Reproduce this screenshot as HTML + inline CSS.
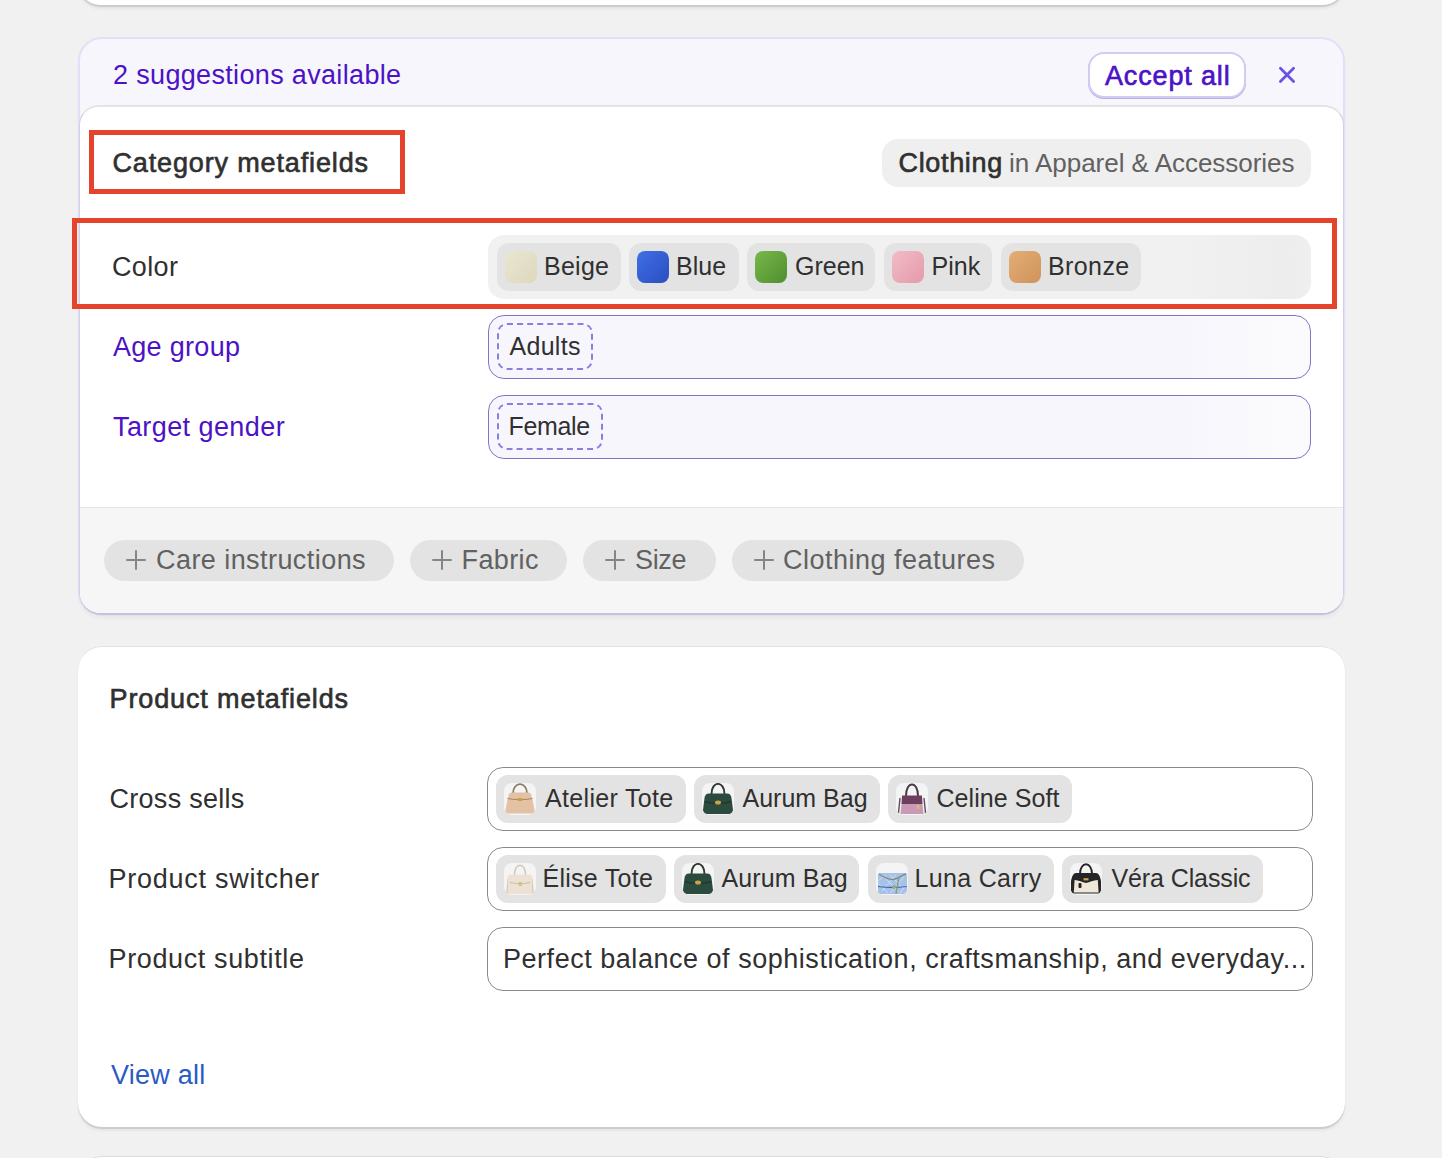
<!DOCTYPE html>
<html><head><meta charset="utf-8">
<style>
*{box-sizing:border-box;margin:0;padding:0}
html,body{width:1442px;height:1158px;overflow:hidden;background:#f1f1f1;font-family:"Liberation Sans",sans-serif;color:#303030}
.abs{position:absolute}
.t{position:absolute;white-space:nowrap;line-height:30px}
.card{position:absolute;background:#fff;border-radius:24px;box-shadow:inset 0 1px 0 #e2e2e2,0 2px 0 #cdcdcd,0 4px 3px rgba(0,0,0,.05)}
.red{position:absolute;border:5px solid #e5432b}
.chip{position:absolute;background:#e3e3e3;border-radius:12px;height:48px}
.sw{position:absolute;left:8px;top:8px;width:32px;height:32px;border-radius:8px}
.fld{position:absolute;border-radius:16px}
.pill{position:absolute;background:#e3e3e3;border-radius:21px;height:41px}
.plus{position:absolute;width:20px;height:20px}
.plus:before{content:"";position:absolute;left:8.6px;top:0;width:2.8px;height:20px;border-radius:2px;background:#858585}
.plus:after{content:"";position:absolute;left:0;top:8.6px;width:20px;height:2.8px;border-radius:2px;background:#858585}
.thumb{position:absolute;left:8px;top:8px;width:32px;height:32px;border-radius:8px;background:#f4f4f4;overflow:hidden}

</style></head><body>
<!-- top partial card -->
<div class="card" style="left:78px;top:-40px;width:1267px;height:45px"></div>

<!-- suggestions card -->
<div class="abs" style="left:78px;top:37px;width:1267px;height:579px;border:2px solid #e3dff8;border-radius:24px;background:#f7f6fd;box-shadow:0 3px 3px rgba(0,0,0,.03)"></div>
<div class="abs" style="left:1088px;top:52px;width:158px;height:46px;background:#fff;border:2px solid #d2cbf4;border-radius:16px;box-shadow:0 1px 0 #b9b0e8"></div>
<svg class="abs" style="left:1277px;top:65px" width="20" height="20" viewBox="0 0 20 20"><path d="M3.4 3.3L16.6 16.5M16.6 3.3L3.4 16.5" stroke="#6a50e4" stroke-width="2.7" stroke-linecap="round"/></svg>

<!-- inner white card -->
<div class="abs" style="left:79px;top:105px;width:1265px;height:509.5px;background:#fff;border-radius:20px 20px 22px 22px;border:1.5px solid #d3d0e4;border-top:2px solid #e4e4e6;border-bottom:2px solid #c6c2d8;overflow:hidden">
  <div class="abs" style="left:0;top:400px;width:1263px;height:107px;background:#f6f6f6;border-top:1px solid #e6e6e6"></div>
</div>
<div class="red" style="left:89px;top:130px;width:316px;height:64px"></div>
<div class="abs" style="left:882px;top:139px;width:429px;height:48px;background:#efefef;border-radius:16px"></div>

<!-- Color row -->
<div class="fld" style="left:488px;top:235px;width:823px;height:64px;background:linear-gradient(to right,#f1f1f1 84%,#ededed 97%,#efefef)"></div>
<div class="chip" style="left:497px;top:243px;width:124px"><div class="sw" style="background:linear-gradient(135deg,#e9e6d2,#ddd8bd)"></div></div>
<div class="chip" style="left:629px;top:243px;width:110px"><div class="sw" style="background:linear-gradient(135deg,#3f6fe6,#2a4fbf)"></div></div>
<div class="chip" style="left:747px;top:243px;width:128px"><div class="sw" style="background:linear-gradient(135deg,#78b84a,#4f8e2f)"></div></div>
<div class="chip" style="left:884px;top:243px;width:108px"><div class="sw" style="background:linear-gradient(135deg,#f2bcc6,#e49aaa)"></div></div>
<div class="chip" style="left:1001px;top:243px;width:140px"><div class="sw" style="background:linear-gradient(135deg,#e3ae74,#cf935a)"></div></div>
<div class="red" style="left:72px;top:218px;width:1265px;height:91px"></div>

<!-- Age group / Target gender -->
<div class="fld" style="left:488px;top:315px;width:823px;height:64px;background:linear-gradient(to right,#f7f6fd 84%,#fbfbfd 97%);border:1.5px solid #7f77c6"></div>
<div class="abs" style="left:497px;top:323px;width:96px;height:47px;border:2px dashed #8a7ede;border-radius:10px"></div>
<div class="fld" style="left:488px;top:395px;width:823px;height:64px;background:linear-gradient(to right,#f7f6fd 84%,#fbfbfd 97%);border:1.5px solid #7f77c6"></div>
<div class="abs" style="left:497px;top:403px;width:106px;height:47px;border:2px dashed #8a7ede;border-radius:10px"></div>

<!-- footer pills -->
<div class="pill" style="left:104px;top:540px;width:290px"><div class="plus" style="left:22px;top:10px"></div></div>
<div class="pill" style="left:410px;top:540px;width:157px"><div class="plus" style="left:22px;top:10px"></div></div>
<div class="pill" style="left:583px;top:540px;width:133px"><div class="plus" style="left:22px;top:10px"></div></div>
<div class="pill" style="left:732px;top:540px;width:292px"><div class="plus" style="left:22px;top:10px"></div></div>

<!-- product metafields card -->
<div class="card" style="left:78px;top:646px;width:1267px;height:481px"></div>
<div class="fld" style="left:487px;top:767px;width:826px;height:64px;border:1.5px solid #8a8a8a;background:#fff"></div>
<div class="chip" style="left:496px;top:775px;width:190px"><div class="thumb"><svg width="32" height="32" viewBox="0 0 32 32"><path d="M9 10.5C9 -2 23 -2 23 10.5" stroke="#8a7c60" stroke-width="1.8" fill="none"/><path d="M8 9.5H24C26 9.5 27 10.5 27.5 12.5L30.5 27C31 29.5 30 30.5 27.5 30.5H4.5C2 30.5 1 29.5 1.5 27L4.5 12.5C5 10.5 6 9.5 8 9.5Z" fill="#e2c2a2"/><path d="M3.5 15.5C10 17 22 17 28.5 15.5" stroke="#a88066" stroke-width="1" fill="none"/><rect x="13.5" y="15" width="5" height="3" rx="1" fill="#c9a246"/></svg></div></div>
<div class="chip" style="left:694px;top:775px;width:186px"><div class="thumb"><svg width="32" height="32" viewBox="0 0 32 32"><path d="M9.5 11C9.5 -2.5 22.5 -2.5 22.5 11" stroke="#2f3833" stroke-width="1.9" fill="none"/><path d="M7 10.5H25C28 10.5 29 12.5 29.5 15L31 27C31 30 29.5 31 27 31H5C2.5 31 1 30 1 27L2.5 15C3 12.5 4 10.5 7 10.5Z" fill="#2b4b3f"/><path d="M3 18.5C10 21 22 21 29 18.5" stroke="#1c3028" stroke-width="1.2" fill="none"/><ellipse cx="16" cy="19.5" rx="3" ry="2" fill="#caa24c"/></svg></div></div>
<div class="chip" style="left:888px;top:775px;width:184px"><div class="thumb"><svg width="32" height="32" viewBox="0 0 32 32"><path d="M4 15L2.5 30M28 15L29.5 30" stroke="#5d4b5a" stroke-width="1.4"/><path d="M10 13C10 -2.5 22 -2.5 22 13" stroke="#4c3c4a" stroke-width="2" fill="none"/><path d="M6 12.5H26L26.5 21H5.5Z" fill="#6c3f5e"/><path d="M5.5 21H26.5L27.5 31H4.5Z" fill="#c99ab6"/><rect x="20.5" y="22" width="3" height="4" fill="#d8b880"/></svg></div></div>
<div class="fld" style="left:487px;top:847px;width:826px;height:64px;border:1.5px solid #8a8a8a;background:#fff"></div>
<div class="chip" style="left:496px;top:855px;width:170px"><div class="thumb"><svg width="32" height="32" viewBox="0 0 32 32"><path d="M10.5 12C10.5 -1 21.5 -1 21.5 12" stroke="#cfc7b8" stroke-width="1.5" fill="none"/><path d="M4 16L3 30M28 16L29 30" stroke="#bdb6aa" stroke-width="1.2"/><path d="M7 11.5H25C27 11.5 28 12.5 28.5 15V31H3.5V15C4 12.5 5 11.5 7 11.5Z" fill="#ebe2d3"/><path d="M6 19.5C12 21 20 21 26 19.5" stroke="#cbbfae" stroke-width="1" fill="none"/><rect x="14.5" y="19" width="3.5" height="4" rx="1" fill="#d6c284"/></svg></div></div>
<div class="chip" style="left:674px;top:855px;width:185px"><div class="thumb"><svg width="32" height="32" viewBox="0 0 32 32"><path d="M9.5 11C9.5 -2.5 22.5 -2.5 22.5 11" stroke="#2f3833" stroke-width="1.9" fill="none"/><path d="M7 10.5H25C28 10.5 29 12.5 29.5 15L31 27C31 30 29.5 31 27 31H5C2.5 31 1 30 1 27L2.5 15C3 12.5 4 10.5 7 10.5Z" fill="#2b4b3f"/><path d="M3 18.5C10 21 22 21 29 18.5" stroke="#1c3028" stroke-width="1.2" fill="none"/><ellipse cx="16" cy="19.5" rx="3" ry="2" fill="#caa24c"/></svg></div></div>
<div class="chip" style="left:868px;top:855px;width:186px"><div class="thumb"><svg width="32" height="32" viewBox="0 0 32 32"><rect x="2" y="10" width="29" height="21" rx="2" fill="#a6c2e8"/><path d="M6 12L22 28M14 12L28 26M2 20L12 30M10 12L2 18M20 12L6 28M28 14L14 30M30 22L24 30" stroke="#c8dcf6" stroke-width="1"/><path d="M2 23.5C9 24.5 23 24.5 31 23.5" stroke="#3f62a8" stroke-width="1.2" fill="none"/><path d="M3 11C9 15 13 17 17 16.5C21 16 26 12 30 11" stroke="#7d8b82" stroke-width="1.3" fill="none"/><path d="M23 14L20 31" stroke="#8a9a7e" stroke-width="1.4"/><circle cx="18" cy="24" r="2" fill="#9aa878"/></svg></div></div>
<div class="chip" style="left:1062px;top:855px;width:201px"><div class="thumb"><svg width="32" height="32" viewBox="0 0 32 32"><path d="M10 11C10 -2 22 -2 22 11" stroke="#242424" stroke-width="1.9" fill="none"/><path d="M6 10H26C28.5 10 30 13 31 18V28C31 30 30 30.5 28 30.5H4C2 30.5 1 30 1 28V18C2 13 3.5 10 6 10Z" fill="#262626"/><path d="M4.6 17C9 17 12 19.5 16 20C20 19.5 23 17 27.8 17L28.6 29.6H3.8Z" fill="#efe7d8"/><rect x="13.5" y="15.2" width="5" height="2.2" fill="#c8a75a"/><rect x="8.5" y="20" width="3" height="5" rx="1" fill="#222"/></svg></div></div>
<div class="fld" style="left:487px;top:927px;width:826px;height:64px;border:1.5px solid #8a8a8a;background:#fff"></div>

<!-- bottom partial card -->
<div class="card" style="left:78px;top:1156px;width:1267px;height:100px;box-shadow:inset 0 1px 0 #dcdcdc"></div>

<div class="t" id="sugg" style="left:113.00px;top:60.00px;font-size:27px;color:#4c12c6;letter-spacing:0.336px">2 suggestions available</div>
<div class="t" id="accept" style="left:1105.00px;top:61.00px;font-size:27px;color:#4c12c6;letter-spacing:0.844px;-webkit-text-stroke:0.65px #4c12c6">Accept all</div>
<div class="t" id="cathead" style="left:112.50px;top:147.60px;font-size:27px;color:#303030;letter-spacing:0.856px;-webkit-text-stroke:0.65px #303030">Category metafields</div>
<div class="t" id="clothing" style="left:898.50px;top:148.00px;font-size:27px;color:#303030;letter-spacing:0.657px;-webkit-text-stroke:0.65px #303030">Clothing</div>
<div class="t" id="inapp" style="left:1009.00px;top:148.00px;font-size:26px;color:#616161;letter-spacing:-0.026px">in Apparel &amp; Accessories</div>
<div class="t" id="color" style="left:112.00px;top:251.60px;font-size:27px;color:#303030;letter-spacing:0.350px">Color</div>
<div class="t" id="beige" style="left:544.00px;top:250.81px;font-size:25px;color:#303030;letter-spacing:0.250px">Beige</div>
<div class="t" id="blue" style="left:676.00px;top:250.81px;font-size:25px;color:#303030;letter-spacing:0.000px">Blue</div>
<div class="t" id="green" style="left:795.00px;top:250.81px;font-size:25px;color:#303030;letter-spacing:0.000px">Green</div>
<div class="t" id="pink" style="left:931.50px;top:250.81px;font-size:25px;color:#303030;letter-spacing:0.067px">Pink</div>
<div class="t" id="bronze" style="left:1048.00px;top:250.81px;font-size:25px;color:#303030;letter-spacing:0.400px">Bronze</div>
<div class="t" id="age" style="left:113.00px;top:331.50px;font-size:27px;color:#4c12c6;letter-spacing:0.300px">Age group</div>
<div class="t" id="adults" style="left:509.50px;top:330.61px;font-size:25px;color:#303030;letter-spacing:0.280px">Adults</div>
<div class="t" id="target" style="left:113.00px;top:411.60px;font-size:27px;color:#4c12c6;letter-spacing:0.417px">Target gender</div>
<div class="t" id="female" style="left:508.50px;top:410.61px;font-size:25px;color:#303030;letter-spacing:-0.360px">Female</div>
<div class="t" id="care" style="left:156.00px;top:545.00px;font-size:27px;color:#616161;letter-spacing:0.438px">Care instructions</div>
<div class="t" id="fabric" style="left:461.50px;top:545.00px;font-size:27px;color:#616161;letter-spacing:0.400px">Fabric</div>
<div class="t" id="size" style="left:635.00px;top:545.00px;font-size:27px;color:#616161;letter-spacing:-0.333px">Size</div>
<div class="t" id="clothfeat" style="left:783.00px;top:545.00px;font-size:27px;color:#616161;letter-spacing:0.488px">Clothing features</div>
<div class="t" id="prodhead" style="left:109.50px;top:683.80px;font-size:27px;color:#303030;letter-spacing:0.882px;-webkit-text-stroke:0.65px #303030">Product metafields</div>
<div class="t" id="cross" style="left:109.50px;top:783.60px;font-size:27px;color:#303030;letter-spacing:0.280px">Cross sells</div>
<div class="t" id="atelier" style="left:545.00px;top:782.81px;font-size:25px;color:#303030;letter-spacing:0.327px">Atelier Tote</div>
<div class="t" id="aurum1" style="left:742.50px;top:782.81px;font-size:25px;color:#303030;letter-spacing:0.000px">Aurum Bag</div>
<div class="t" id="celine" style="left:936.50px;top:782.81px;font-size:25px;color:#303030;letter-spacing:0.060px">Celine Soft</div>
<div class="t" id="switcher" style="left:108.50px;top:864.00px;font-size:27px;color:#303030;letter-spacing:0.747px">Product switcher</div>
<div class="t" id="elise" style="left:542.50px;top:862.81px;font-size:25px;color:#303030;letter-spacing:0.267px">Élise Tote</div>
<div class="t" id="aurum2" style="left:721.50px;top:862.81px;font-size:25px;color:#303030;letter-spacing:0.125px">Aurum Bag</div>
<div class="t" id="luna" style="left:914.50px;top:862.81px;font-size:25px;color:#303030;letter-spacing:0.333px">Luna Carry</div>
<div class="t" id="vera" style="left:1111.50px;top:862.81px;font-size:25px;color:#303030;letter-spacing:-0.109px">Véra Classic</div>
<div class="t" id="subtitle" style="left:108.50px;top:944.00px;font-size:27px;color:#303030;letter-spacing:0.627px">Product subtitle</div>
<div class="t" id="perfect" style="left:503.00px;top:944.00px;font-size:27px;color:#303030;letter-spacing:0.528px">Perfect balance of sophistication, craftsmanship, and everyday...</div>
<div class="t" id="viewall" style="left:111.00px;top:1060.00px;font-size:27px;color:#2a5bc3;letter-spacing:0.257px">View all</div>
</body></html>
